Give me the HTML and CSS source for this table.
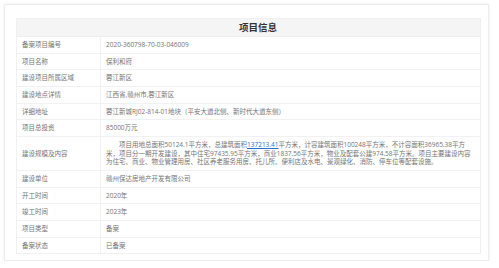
FILE: index.html
```html
<!DOCTYPE html>
<html lang="zh-CN">
<head>
<meta charset="utf-8">
<title>项目信息</title>
<link rel="stylesheet" href="styles.css">
</head>
<body>
<div class="card">
  <div class="table">
    <div class="head">项目信息</div>
    <div class="row"><div class="label">备案项目编号</div><div class="value">2020-360798-70-03-046009</div></div>
    <div class="row"><div class="label">项目名称</div><div class="value">保利和府</div></div>
    <div class="row"><div class="label">建设项目所属区域</div><div class="value">蓉江新区</div></div>
    <div class="row"><div class="label">建设地点详情</div><div class="value">江西省,赣州市,蓉江新区</div></div>
    <div class="row"><div class="label">详细地址</div><div class="value">蓉江新城RJ02-814-01地块（平安大道北侧、新时代大道东侧）</div></div>
    <div class="row"><div class="label">项目总投资</div><div class="value">85000万元</div></div>
    <div class="row"><div class="label">建设规模及内容</div><div class="value para">项目用地总面积50124.1平方米，总建筑面积<a class="link" href="#">137213.41</a>平方米，计容建筑面积100248平方米，不计容面积36965.38平方<br>米，项目分一期开发建设，其中住宅97435.95平方米，商业1837.56平方米，物业及配套公建974.58平方米。项目主要建设内容<br>为住宅、商业、物业管理用房、社区养老服务用房、托儿所、便利店及水电、景观绿化、消防、停车位等配套设施。</div></div>
    <div class="row"><div class="label">建设单位</div><div class="value">赣州保达房地产开发有限公司</div></div>
    <div class="row"><div class="label">开工时间</div><div class="value">2020年</div></div>
    <div class="row"><div class="label">竣工时间</div><div class="value">2023年</div></div>
    <div class="row"><div class="label">项目类型</div><div class="value">备案</div></div>
    <div class="row last"><div class="label">备案状态</div><div class="value">已备案</div></div>
  </div>
</div>
</body>
</html>
```

FILE: styles.css
```css
html, body {
  margin: 0;
  padding: 0;
  background: #ffffff;
}
body {
  font-family: "Open Sans", "Noto Sans CJK SC", sans-serif;
  color: #747474;
}
.card {
  margin: 4px 0 0 4px;
  width: 485px;
  height: 257px;
  box-sizing: border-box;
  border: 1px solid #ededed;
  box-shadow: 0 0 3px rgba(0, 0, 0, 0.07);
  padding: 13px 0 0 11px;
}
.table {
  width: 465px;
  border: 1px solid #f0f0f0;
  box-sizing: border-box;
}
.head {
  height: 18px;
  line-height: 18px;
  background: #f5f5f5;
  border-bottom: 1px solid #eeeeee;
  box-sizing: border-box;
  text-align: center;
  padding-left: 19px;
  font-size: 9.5px;
  font-weight: bold;
  color: #333333;
}
.row {
  display: flex;
  border-bottom: 1px solid #f1f1f1;
  font-size: 6.5px;
  line-height: 8.5px;
}
.row.last {
  border-bottom: none;
}
.label {
  width: 84px;
  flex: none;
  box-sizing: border-box;
  border-right: 1px solid #f1f1f1;
  padding: 4px 5px 3.2px 5px;
  display: flex;
  align-items: center;
}
.value {
  flex: 1;
  padding: 4px 5px 3.2px 5px;
}
.para {
  text-indent: 13px;
}
.link {
  color: #2e6fd6;
  text-decoration: underline;
}
```
